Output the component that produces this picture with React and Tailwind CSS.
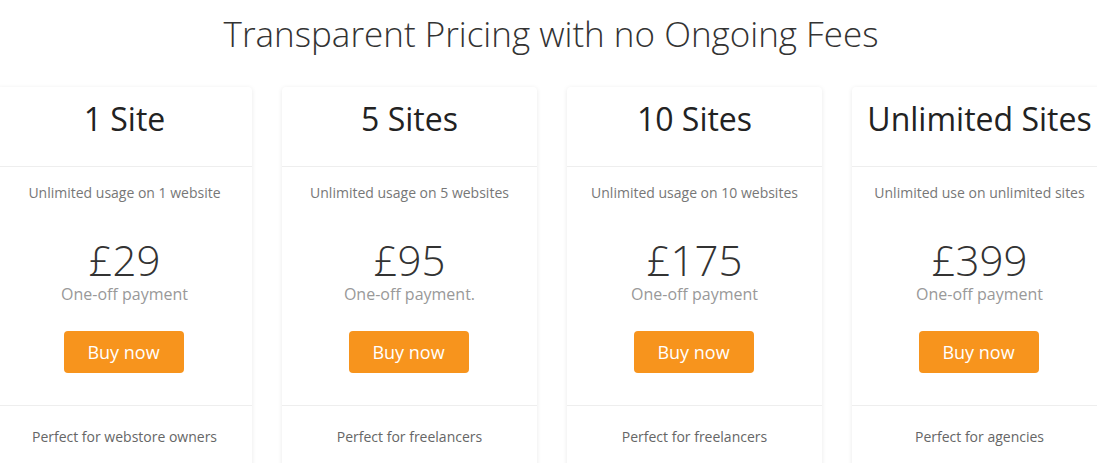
const plans = [
  { name: '1 Site', desc: 'Unlimited usage on 1 website', price: '£29', note: 'One-off payment', audience: 'Perfect for webstore owners' },
  { name: '5 Sites', desc: 'Unlimited usage on 5 websites', price: '£95', note: 'One-off payment.', audience: 'Perfect for freelancers' },
  { name: '10 Sites', desc: 'Unlimited usage on 10 websites', price: '£175', note: 'One-off payment', audience: 'Perfect for freelancers' },
  { name: 'Unlimited Sites', desc: 'Unlimited use on unlimited sites', price: '£399', note: 'One-off payment', audience: 'Perfect for agencies' },
];

const App = () => {
  return (
    <div className="min-h-screen bg-white overflow-hidden font-['Open_Sans',sans-serif]">
      <h1 className="pt-[11px] pl-[5px] h-[87px] text-center text-[35px] leading-[46px] font-light text-[#333]">
        Transparent Pricing with no Ongoing Fees
      </h1>

      <div className="flex gap-[30px] w-[1110px] ml-[-3px]">
        {plans.map((p) => (
          <div key={p.name} className="w-[255px] shrink-0 bg-white rounded-[4px] shadow-[0_1px_5px_rgba(0,0,0,0.09)]">
            {/* Header */}
            <div className="h-[80px] pt-[14px] border-b border-[#eee] text-center">
              <h3 className="text-[32px] leading-[36px] text-[#222] whitespace-nowrap">{p.name}</h3>
            </div>

            {/* Body */}
            <div className="pt-[16px] pb-[32px] flex flex-col items-center border-b border-[#eee]">
              <p className="text-[14px] leading-[20px] text-[#777]">{p.desc}</p>
              <div className="mt-[36px] text-[42px] leading-[42px] font-light text-[#333]">{p.price}</div>
              <p className="mt-[2px] text-[16px] leading-[22px] text-[#999]">{p.note}</p>
              <button className="mt-[26px] mr-[2px] w-[120px] h-[42px] rounded-[4px] bg-[#f7941d] text-white text-[18px]">
                Buy now
              </button>
            </div>

            {/* Footer */}
            <div className="pt-[21px] pb-[20px] text-center">
              <p className="text-[14px] leading-[20px] text-[#666]">{p.audience}</p>
            </div>
          </div>
        ))}
      </div>
    </div>
  );
};

export default App;
